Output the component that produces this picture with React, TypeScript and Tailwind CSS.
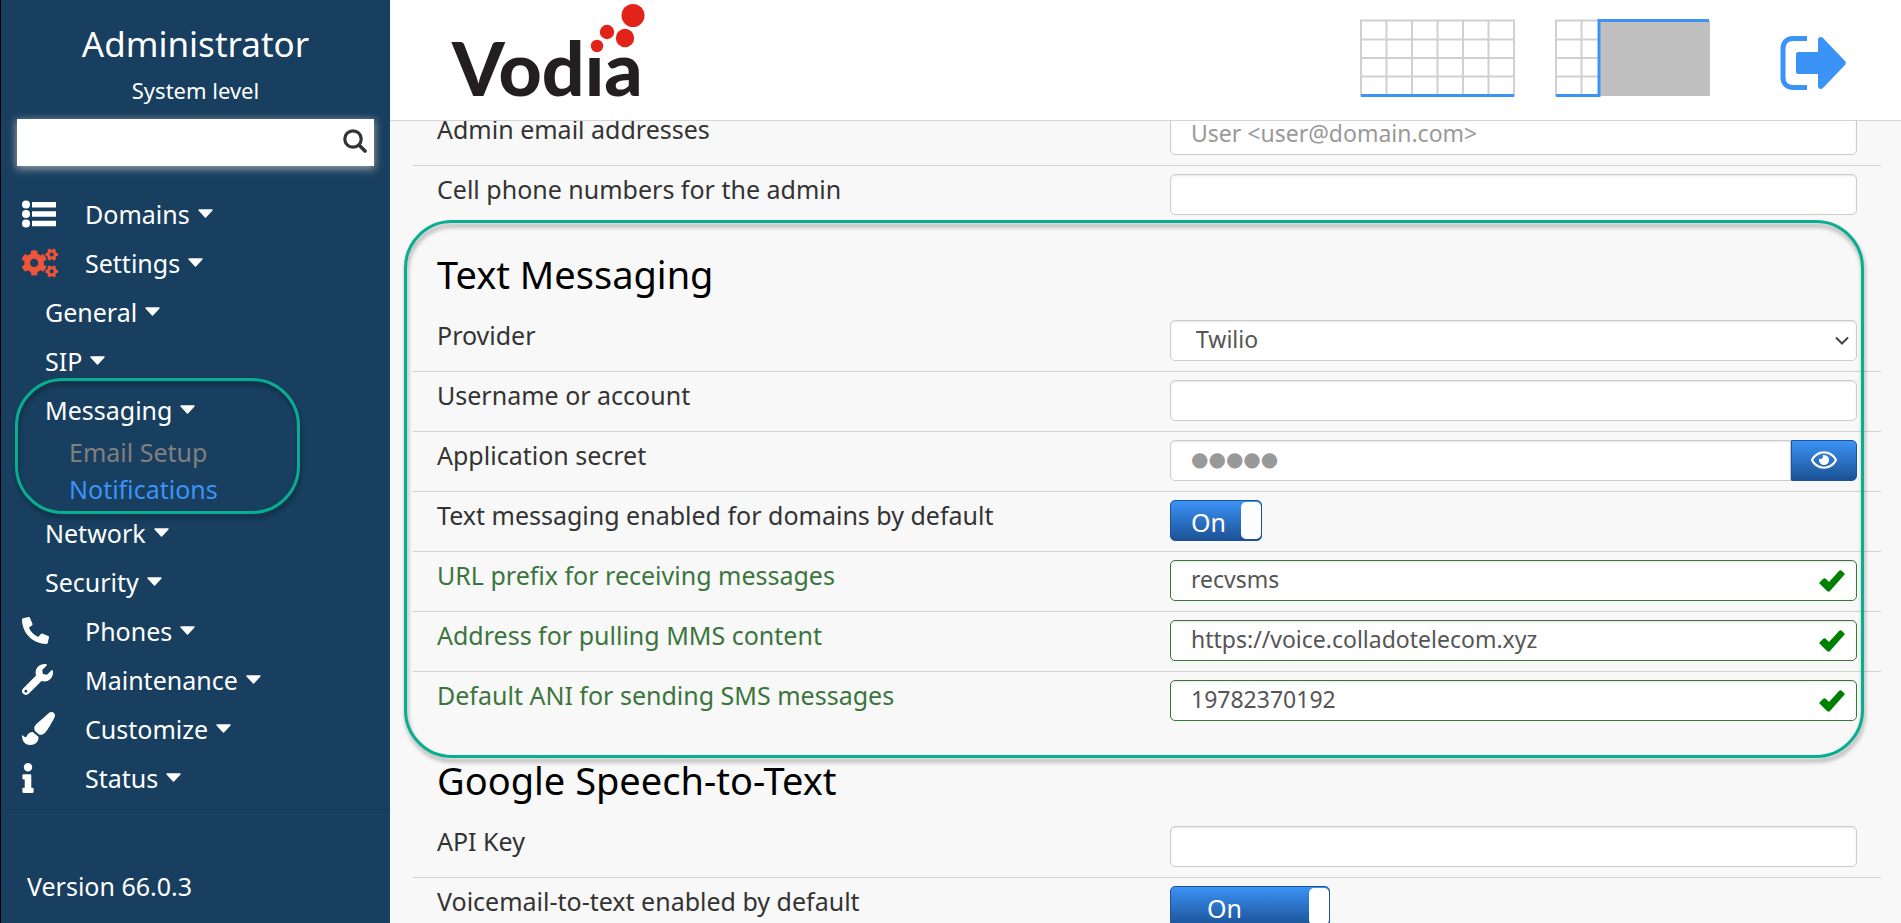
import React from "react";
import {
  FaCogs,
  FaInfo,
  FaPaintBrush,
  FaPhoneAlt,
  FaRegEye,
  FaWrench,
} from "react-icons/fa";

const Caret = () => (
  <svg width="15" height="9" viewBox="0 0 15 9" aria-hidden="true">
    <path
      d="M1 1h13L7.5 8z"
      fill="currentColor"
      stroke="currentColor"
      strokeWidth="1.4"
      strokeLinejoin="round"
    />
  </svg>
);

const ListIcon = () => (
  <svg width="34" height="28" viewBox="0 0 34 28" fill="currentColor">
    <circle cx="4" cy="4.5" r="4" />
    <circle cx="4" cy="14" r="4" />
    <circle cx="4" cy="23.5" r="4" />
    <path d="M10 2h24v5.5H10zM10 11.3h24v5.5H10zM10 20.8h24v5.5H10z" />
  </svg>
);

// outlined area drawn over the page to point at something
const Highlight = ({ className }: { className: string }) => (
  <div
    className={`absolute pointer-events-none rounded-[48px] border-3 border-[#07ae90] ${className}`}
  />
);

const MenuItem = ({
  label,
  icon,
}: {
  label: string;
  icon: React.ReactNode;
}) => (
  <li>
    <a href="#" className="flex items-center h-[49px] pl-[21px]">
      <span className="w-[63px]">{icon}</span>
      <span className="mr-2">{label}</span>
      <Caret />
    </a>
  </li>
);

const SubItem = ({ label }: { label: string }) => (
  <a href="#" className="flex items-center gap-2 h-[49px] pl-11">
    {label}
    <Caret />
  </a>
);

const Sidebar = () => (
  <aside className="flex flex-col w-[390px] shrink-0 bg-[#183f5f] text-white border-l border-black">
    <div className="text-center pt-[19px]">
      <div className="text-[35px] leading-[50px]">Administrator</div>
      <div className="text-[22px] leading-[42px]">System level</div>
    </div>
    <form className="flex items-center bg-white h-[47px] mt-2 mx-4 shadow-[0_2px_8px_1px_rgba(230,220,210,0.6)]">
      <input
        type="search"
        aria-label="Search"
        className="grow min-w-0 h-full px-3 text-[#333] outline-none"
      />
      <button type="button" aria-label="Search" className="pr-[7px] pb-1">
        <svg width="24" height="24" viewBox="0 0 24 24" fill="none">
          <circle cx="10" cy="10" r="8.2" stroke="#333" strokeWidth="3.2" />
          <path
            d="M16 16l6 6"
            stroke="#333"
            strokeWidth="3.6"
            strokeLinecap="round"
          />
        </svg>
      </button>
    </form>
    <nav className="mt-[23px] border-b border-[#163a58] pb-[7px]">
      <ul>
        <MenuItem label="Domains" icon={<ListIcon />} />
        <MenuItem
          label="Settings"
          icon={<FaCogs size={36} className="text-[#ee5437]" />}
        />
        <li>
          <ul>
            <li>
              <SubItem label="General" />
            </li>
            <li>
              <SubItem label="SIP" />
            </li>
            <li className="relative">
              <SubItem label="Messaging" />
              <a
                href="#"
                className="flex items-center h-[37px] pl-[68px] pb-[2px] text-[#808080]"
              >
                Email Setup
              </a>
              <a
                href="#"
                className="flex items-center h-[37px] pl-[68px] pb-[2px] text-[#3b93f7]"
              >
                Notifications
              </a>
              <Highlight className="-top-[7px] -bottom-[6px] left-[14px] right-[90px] drop-shadow-[1px_4px_2px_rgba(0,0,0,0.35)]" />
            </li>
            <li>
              <SubItem label="Network" />
            </li>
            <li>
              <SubItem label="Security" />
            </li>
          </ul>
        </li>
        <MenuItem label="Phones" icon={<FaPhoneAlt size={27} />} />
        <MenuItem label="Maintenance" icon={<FaWrench size={31} />} />
        <MenuItem label="Customize" icon={<FaPaintBrush size={33} />} />
        <MenuItem label="Status" icon={<FaInfo className="w-3 h-[30px]" />} />
      </ul>
    </nav>
    <div className="mt-auto pl-[26px] pb-[21px]">Version 66.0.3</div>
  </aside>
);

const Logo = () => (
  <a
    href="#"
    aria-label="Vodia"
    className="relative block h-[120px] font-['Lato',sans-serif] font-black text-[75px] leading-[134px] text-[#231f20]"
  >
    Vodıa
    <svg
      className="absolute top-0 left-[138px]"
      width="56"
      height="56"
      viewBox="0 0 56 56"
      fill="#e2231a"
      aria-hidden="true"
    >
      <circle cx="43" cy="15.5" r="11.5" />
      <circle cx="17" cy="32" r="7.2" />
      <circle cx="35" cy="38" r="9.2" />
      <circle cx="7" cy="46" r="6.2" />
    </svg>
  </a>
);

const Header = () => (
  <header className="flex items-center justify-between h-[121px] shrink-0 bg-white border-b border-[#d5d5d5] pl-[62px] pr-[54px]">
    <Logo />
    <div className="flex items-center gap-10">
      <button aria-label="Full grid" className="-mt-1">
        <svg width="155" height="78" viewBox="0 0 155 78" fill="none">
          <path
            d="M1 1.5h153v75H1zM26.5 1v75M52 1v75M77.5 1v75M103 1v75M128.5 1v75M1 20.5h153M1 39h153M1 57.5h153"
            stroke="#d0d0d0"
            strokeWidth="2"
          />
          <path d="M1 76.5h153" stroke="#3b93f7" strokeWidth="3" />
        </svg>
      </button>
      <button aria-label="Split view" className="-mt-1">
        <svg width="155" height="78" viewBox="0 0 155 78" fill="none">
          <path
            d="M1 1.5h43v75H1zM26.5 1v75M1 20.5h43M1 39h43M1 57.5h43"
            stroke="#d0d0d0"
            strokeWidth="2"
          />
          <path d="M44 2h111v75H44z" fill="#c0c0c0" />
          <path d="M1 76.5h43V1.5h110" stroke="#3b93f7" strokeWidth="3" />
        </svg>
      </button>
      <button aria-label="Log out" className="ml-[30px] mt-1.5">
        <svg width="67" height="56" viewBox="0 0 67 56" fill="none">
          <path
            d="M27 3.5H13C7 3.5 3 7.5 3 13.5v29c0 6 4 10 10 10h14"
            stroke="#3b93f7"
            strokeWidth="5"
          />
          <path
            d="M18 17h20V5c0-3 3-4 5-2l22 23c1 1 1 3 0 4L43 53c-2 2-5 1-5-2V39H18c-1 0-2-1-2-2V19c0-1 1-2 2-2z"
            fill="#3b93f7"
          />
        </svg>
      </button>
    </div>
  </header>
);

const Row = ({
  id,
  label,
  valid,
  last,
  children,
}: {
  id: string;
  label: string;
  valid?: boolean;
  last?: boolean;
  children: React.ReactNode;
}) => (
  <div
    className={`grid grid-cols-[733fr_687fr] h-[60px] px-6 pt-2 border-b ${
      last ? "border-transparent" : "border-[#d2d3d4]"
    }`}
  >
    <label
      htmlFor={id}
      className={`leading-[30px] whitespace-nowrap ${
        valid ? "text-[#3a763c]" : "text-[#333]"
      }`}
    >
      {label}
    </label>
    <div className="relative h-[41px]">{children}</div>
  </div>
);

const fieldClass =
  "block w-full h-[41px] px-5 pb-[3px] text-[#555] bg-white border rounded-[5px] shadow-[inset_0_1px_2px_rgba(0,0,0,0.1)] outline-none placeholder:text-[#999]";

const TextField = ({
  id,
  valid,
  ...rest
}: {
  id: string;
  valid?: boolean;
  placeholder?: string;
  defaultValue?: string;
}) => (
  <>
    <input
      id={id}
      type="text"
      className={`${fieldClass} text-[23px] ${
        valid ? "border-[#3a763c]" : "border-[#ccc]"
      }`}
      {...rest}
    />
    {valid && (
      <svg
        className="absolute right-3 top-[10px]"
        width="26"
        height="22"
        viewBox="0 0 26 22"
        aria-hidden="true"
      >
        <path
          d="M0 13l4-4c1-1 2-1 3 0l3 3L20 1c1-1 2-1 3 0l3 3-15 17c-1 1-2 1-3 0z"
          fill="#008000"
        />
      </svg>
    )}
  </>
);

const Toggle = ({ id, className }: { id: string; className: string }) => (
  <label
    className={`flex h-[41px] rounded-[5px] border border-[#1c5296] bg-linear-to-b from-[#3b93f7] to-[#1c5296] text-white cursor-pointer ${className}`}
  >
    <input id={id} type="checkbox" defaultChecked className="sr-only" />
    <span className="grow leading-[43px]">On</span>
    <span className="w-5 my-px bg-white rounded-[5px]" />
  </label>
);

const Heading = ({ children }: { children: React.ReactNode }) => (
  <h2 className="h-[86px] pt-[25px] px-6 text-[38px] leading-[46px] text-black">
    {children}
  </h2>
);

const App = () => {
  return (
    <div className="flex h-screen overflow-hidden bg-[#f8f8f8] font-['Noto_Sans',sans-serif] text-[25px] leading-8">
      <Sidebar />
      <div className="flex flex-col grow min-w-0">
        <Header />
        <main className="grow min-h-0 overflow-hidden pl-[23px] pr-5">
          <section className="-mt-[15px]">
            <Row id="email" label="Admin email addresses">
              <TextField id="email" placeholder="User <user@domain.com>" />
            </Row>
            <Row id="cell" label="Cell phone numbers for the admin" last>
              <TextField id="cell" />
            </Row>
          </section>

          <section className="relative">
            <Heading>Text Messaging</Heading>
            <Row id="provider" label="Provider">
              <select
                id="provider"
                className={`${fieldClass} appearance-none border-[#ccc] pl-[25px] text-[23px]`}
              >
                <option>Twilio</option>
              </select>
              <svg
                className="absolute right-2 top-4 pointer-events-none"
                width="14"
                height="9"
                viewBox="0 0 14 9"
                fill="none"
                aria-hidden="true"
              >
                <path d="M1 1.5l6 6 6-6" stroke="#444" strokeWidth="2" />
              </svg>
            </Row>
            <Row id="account" label="Username or account">
              <TextField id="account" />
            </Row>
            <Row id="secret" label="Application secret">
              <div className="flex">
                <input
                  id="secret"
                  type="password"
                  placeholder="●●●●●"
                  className={`${fieldClass} border-[#ccc] rounded-r-none text-[20px] font-['DejaVu_Sans',sans-serif]`}
                />
                <button
                  aria-label="Show secret"
                  className="flex items-center justify-center w-[66px] shrink-0 rounded-r-[5px] border border-[#1c5296] bg-linear-to-b from-[#3b93f7] to-[#1c5296] pb-[2px] text-white"
                >
                  <FaRegEye size={26} />
                </button>
              </div>
            </Row>
            <Row
              id="enabled"
              label="Text messaging enabled for domains by default"
            >
              <Toggle id="enabled" className="w-[92px] pl-5" />
            </Row>
            <Row id="prefix" label="URL prefix for receiving messages" valid>
              <TextField id="prefix" defaultValue="recvsms" valid />
            </Row>
            <Row id="mms" label="Address for pulling MMS content" valid>
              <TextField
                id="mms"
                defaultValue="https://voice.colladotelecom.xyz"
                valid
              />
            </Row>
            <Row
              id="ani"
              label="Default ANI for sending SMS messages"
              valid
              last
            >
              <TextField id="ani" defaultValue="19782370192" valid />
            </Row>
            <Highlight className="-top-[6px] -bottom-[26px] -left-[9px] right-[17px] drop-shadow-[1px_4px_2px_rgba(0,0,0,0.35)]" />
          </section>

          <section>
            <Heading>Google Speech-to-Text</Heading>
            <Row id="apikey" label="API Key">
              <TextField id="apikey" />
            </Row>
            <Row id="voicemail" label="Voicemail-to-text enabled by default">
              <Toggle id="voicemail" className="w-[160px] pl-9" />
            </Row>
          </section>
        </main>
      </div>
    </div>
  );
};

export default App;
